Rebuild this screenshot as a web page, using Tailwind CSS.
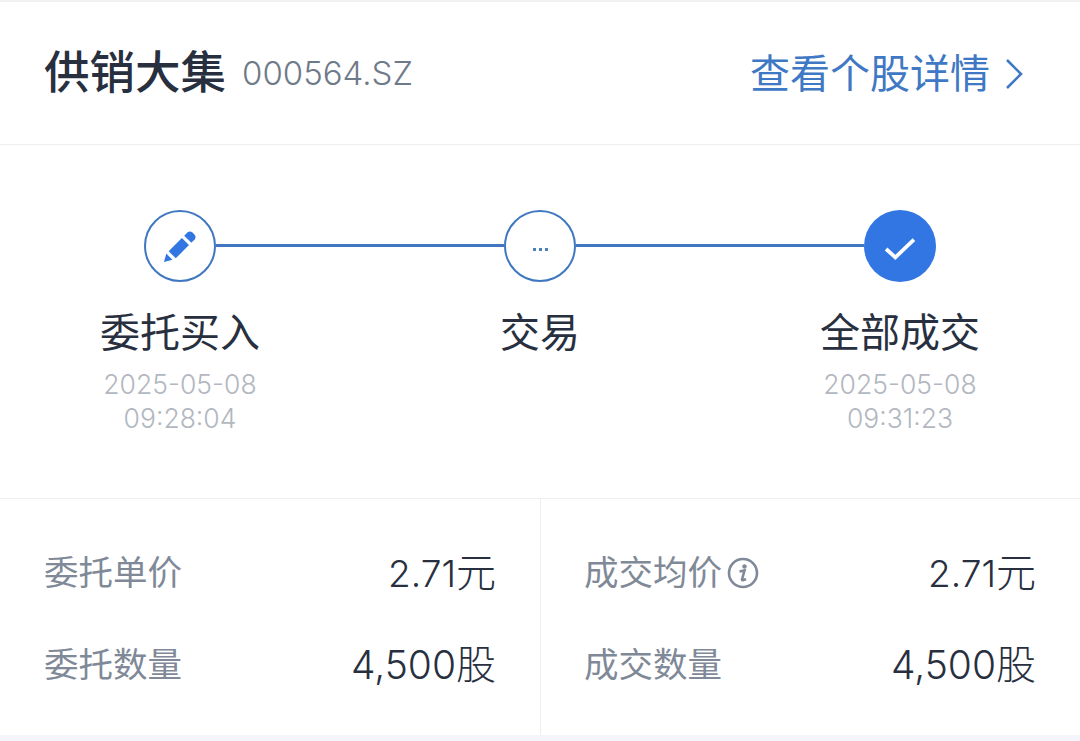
<!DOCTYPE html>
<html lang="zh-CN">
<head>
  <meta charset="UTF-8">
  <title>委托详情</title>
  <script src="https://cdn.jsdelivr.net/npm/@tailwindcss/browser@4"></script>
</head>
<body class="bg-white font-['Inter','Noto_Sans_CJK_SC',sans-serif]">
  <div class="w-[1080px] h-[741px] overflow-hidden flex flex-col">
    <!-- Header -->
    <header class="h-[145px] shrink-0 border-t-2 border-b border-t-[#f0f1f3] border-b-[#eceef0] pl-11 pr-[56px] flex items-center justify-between">
      <div class="flex items-center">
        <h1 class="text-[45.5px] leading-none font-medium text-[#28303f]">供销大集</h1>
        <span class="ml-4 text-[33px] leading-none font-light text-[#6f7a89]">000564.SZ</span>
      </div>
      <a class="flex items-center text-[40px] leading-none text-[#3f78c4] pt-[2px]">
        <span class="mr-[14px]">查看个股详情</span>
        <svg class="w-[20px] h-[34px]" viewBox="0 0 20 34" fill="none" stroke="#3f78c4" stroke-width="2.6">
          <path d="M3 3 L17 17 L3 31" />
        </svg>
      </a>
    </header>

    <!-- Steps -->
    <section class="h-[353px] shrink-0 relative pt-[65px] grid grid-cols-3 px-0">
      <div class="absolute left-[216px] top-[99px] w-[288px] h-[3px] bg-[#3f78c0]"></div>
      <div class="absolute left-[576px] top-[99px] w-[288px] h-[3px] bg-[#3f78c0]"></div>

      <div class="flex flex-col items-center">
        <div class="w-[72px] h-[72px] rounded-full border-2 border-[#3f78c0] bg-white flex items-center justify-center">
          <svg class="w-[34px] h-[34px] mt-[2px]" viewBox="0 0 36 36" fill="#3276e4">
            <path d="M1 34 L3.5 25 L10 31.5 Z" />
            <path d="M6 22.5 L20 8.5 L27.5 16 L13.5 30 Z" />
            <path d="M22.5 6 L26 2.5 Q28.5 0.5 31 2.5 L33.5 5 Q35.5 7.5 33.5 10 L30 13.5 Z" />
          </svg>
        </div>
        <div class="mt-[28px] text-[40px] leading-[46px] text-[#28303f]">委托买入</div>
        <div class="mt-[11px] text-[26.5px] leading-[34px] font-light text-[#b2b7c0] text-center">2025-05-08<br>09:28:04</div>
      </div>

      <div class="flex flex-col items-center">
        <div class="w-[72px] h-[72px] rounded-full border-2 border-[#3f78c0] bg-white flex items-center justify-center gap-[3px] pt-[6px]">
          <span class="w-[3px] h-[3px] bg-[#4a7fc0]"></span>
          <span class="w-[3px] h-[3px] bg-[#4a7fc0]"></span>
          <span class="w-[3px] h-[3px] bg-[#4a7fc0]"></span>
        </div>
        <div class="mt-[28px] text-[40px] leading-[46px] text-[#28303f]">交易</div>
      </div>

      <div class="flex flex-col items-center">
        <div class="relative w-[72px] h-[72px] rounded-full bg-[#3276e4] flex items-center justify-center">
          <svg class="w-[34px] h-[26px] mt-[6px]" viewBox="0 0 36 28" fill="none" stroke="#fff" stroke-width="4">
            <path d="M3 14 L13 23 L33 4" />
          </svg>
        </div>
        <div class="mt-[28px] text-[40px] leading-[46px] text-[#28303f]">全部成交</div>
        <div class="mt-[11px] text-[26.5px] leading-[34px] font-light text-[#b2b7c0] text-center">2025-05-08<br>09:31:23</div>
      </div>
    </section>

    <!-- Order numbers -->
    <section class="h-[237px] shrink-0 border-t border-[#eceef0] grid grid-cols-[541px_539px]">
      <div class="border-r border-[#eceef0] pl-11 pr-[44px] pt-[52px] flex flex-col gap-[48px]">
        <div class="flex items-center justify-between h-[44px]">
          <span class="text-[34.5px] leading-none text-[#7f8997]">委托单价</span>
          <span class="text-[37px] leading-none font-light text-[#28303f]">2.71<span class="text-[40px]">元</span></span>
        </div>
        <div class="flex items-center justify-between h-[44px]">
          <span class="text-[34.5px] leading-none text-[#7f8997]">委托数量</span>
          <span class="text-[39px] leading-none font-light text-[#28303f]">4,500<span class="text-[40px]">股</span></span>
        </div>
      </div>
      <div class="pl-[43px] pr-[44px] pt-[52px] flex flex-col gap-[48px]">
        <div class="flex items-center justify-between h-[44px]">
          <span class="flex items-center text-[34.5px] leading-none text-[#7f8997]">
            成交均价
            <svg class="ml-[5px] w-[32px] h-[32px]" viewBox="0 0 32 32" fill="none">
              <circle cx="16" cy="16" r="14" stroke="#7f8997" stroke-width="2.6" />
              <circle cx="17.5" cy="9.5" r="2.2" fill="#7f8997" />
              <path d="M12.5 14.5 L17.5 13.5 L15 22.5 Q15 24 19 22" stroke="#7f8997" stroke-width="2.6" />
            </svg>
          </span>
          <span class="text-[37px] leading-none font-light text-[#28303f]">2.71<span class="text-[40px]">元</span></span>
        </div>
        <div class="flex items-center justify-between h-[44px]">
          <span class="text-[34.5px] leading-none text-[#7f8997]">成交数量</span>
          <span class="text-[39px] leading-none font-light text-[#28303f]">4,500<span class="text-[40px]">股</span></span>
        </div>
      </div>
    </section>

    <div class="flex-1 bg-[#f4f5fa]"></div>
  </div>
</body>
</html>
